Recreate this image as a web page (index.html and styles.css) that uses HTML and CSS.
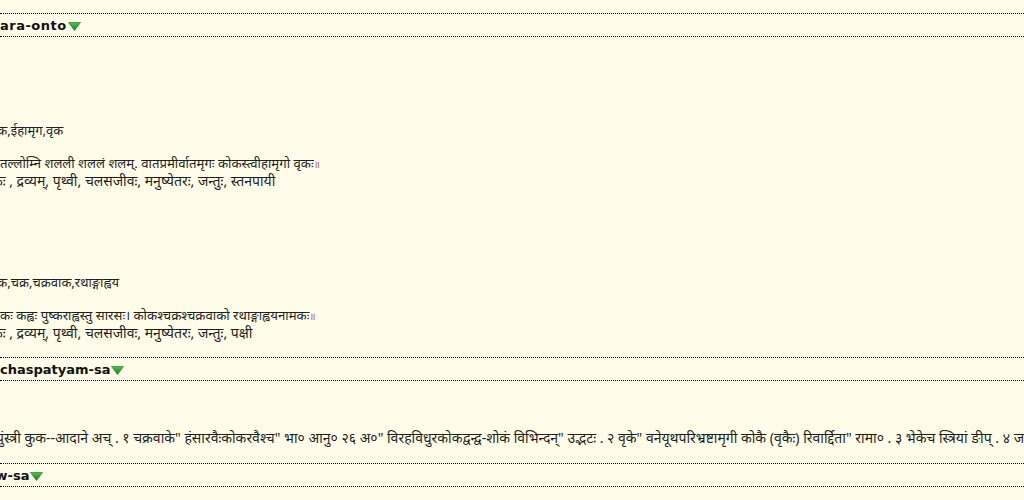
FILE: index.html
```html
<!DOCTYPE html>
<html>
<head>
<meta charset="utf-8">
<link rel="stylesheet" href="styles.css">
</head>
<body>
<div class="page">
  <div class="dict-head"><span class="dict-name first">ara-onto</span><svg class="tri" width="13" height="9" viewBox="0 0 13 9"><defs><linearGradient id="g1" x1="0" y1="0" x2="0" y2="1"><stop offset="0" stop-color="#4cc64c"/><stop offset="1" stop-color="#107f10"/></linearGradient></defs><polygon points="0.5,0.5 12.5,0.5 6.5,8.5" fill="url(#g1)" stroke="#1a6f1a" stroke-width="0.6"/></svg></div>
  <div class="dict-body onto">
    <div class="entry">
      <div class="line syn cut">कोक,ईहामृग,वृक</div>
      <div class="verse">
        <div class="line shloka cut2">तल्लोम्नि शलली शललं शलम्. वातप्रमीर्वातमृगः कोकस्त्वीहामृगो वृकः<span class="danda">॥</span></div>
        <div class="line cut3">कः , द्रव्यम्, पृथ्वी, चलसजीवः, मनुष्येतरः, जन्तुः, स्तनपायी</div>
      </div>
    </div>
    <div class="entry">
      <div class="line syn cut">कोक,चक्र,चक्रवाक,रथाङ्गाह्वय</div>
      <div class="verse">
        <div class="line shloka cut2">कः कह्वः पुष्कराह्वस्तु सारसः। कोकश्चक्रश्चक्रवाको रथाङ्गाह्वयनामकः<span class="danda">॥</span></div>
        <div class="line cut3">कः , द्रव्यम्, पृथ्वी, चलसजीवः, मनुष्येतरः, जन्तुः, पक्षी</div>
      </div>
    </div>
  </div>
  <div class="dict-head"><span class="dict-name">chaspatyam-sa</span><svg class="tri" width="13" height="9" viewBox="0 0 13 9"><defs><linearGradient id="g2" x1="0" y1="0" x2="0" y2="1"><stop offset="0" stop-color="#4cc64c"/><stop offset="1" stop-color="#107f10"/></linearGradient></defs><polygon points="0.5,0.5 12.5,0.5 6.5,8.5" fill="url(#g2)" stroke="#1a6f1a" stroke-width="0.6"/></svg></div>
  <div class="dict-body vach">
    <div class="line cut4">पुंस्त्री कुक--आदाने अच् . १ चक्रवाके" हंसारवैःकोकरवैश्च" भा० आनु० २६ अ०" विरहविधुरकोकद्वन्द्व-शोकं विभिन्दन्" उद्भटः . २ वृके" वनेयूथपरिभ्रष्टामृगी कोकै (वृकैः) रिवार्द्दिता" रामा० . ३ भेकेच स्त्रियां ङीप् . ४ जङ्गलखर्जूरे</div>
  </div>
  <div class="dict-head"><span class="dict-name cut5">mw-sa</span><svg class="tri" width="13" height="9" viewBox="0 0 13 9"><defs><linearGradient id="g3" x1="0" y1="0" x2="0" y2="1"><stop offset="0" stop-color="#4cc64c"/><stop offset="1" stop-color="#107f10"/></linearGradient></defs><polygon points="0.5,0.5 12.5,0.5 6.5,8.5" fill="url(#g3)" stroke="#1a6f1a" stroke-width="0.6"/></svg></div>
</div>
</body>
</html>
```
FILE: styles.css
```css
html, body {
  margin: 0;
  padding: 0;
  background: #fffdea;
  overflow: hidden;
}
.page {
  padding-top: 13px;
  width: 1024px;
  overflow: hidden;
  color: #1e1e1e;
  font-family: "DejaVu Sans", sans-serif;
}
.dict-head {
  border-top: 1px dotted #000;
  border-bottom: 1px dotted #000;
  height: 22px;
  display: flex;
  align-items: center;
  white-space: nowrap;
  overflow: hidden;
}
.dict-name {
  font-weight: bold;
  font-size: 13px;
  color: #111;
}
.dict-name.first {
  letter-spacing: 0.5px;
}
.tri {
  flex: none;
  margin-left: 1px;
  margin-top: 2px;
}
.dict-body {
  font-family: "Noto Sans", "DejaVu Sans", sans-serif;
  font-size: 14px;
  white-space: nowrap;
  overflow: hidden;
}
.line {
  height: 18px;
  line-height: 18px;
}
.syn {
  font-size: 13px;
}
.shloka {
  font-size: 13.2px;
}
.onto {
  padding-bottom: 15px;
}
.entry {
  padding-top: 84px;
}
.entry + .entry {
  padding-top: 83px;
}
.verse {
  margin-top: 15px;
}
.danda {
  color: #b55;
  font-size: 10px;
  line-height: 0;
}
.vach {
  padding-top: 48px;
  padding-bottom: 16px;
}
.cut { text-indent: -16px; }
.cut2 { text-indent: 0; }
.cut3 { text-indent: -8px; }
.cut4 { text-indent: -4px; }
.cut5 { margin-left: -18px; }
```
